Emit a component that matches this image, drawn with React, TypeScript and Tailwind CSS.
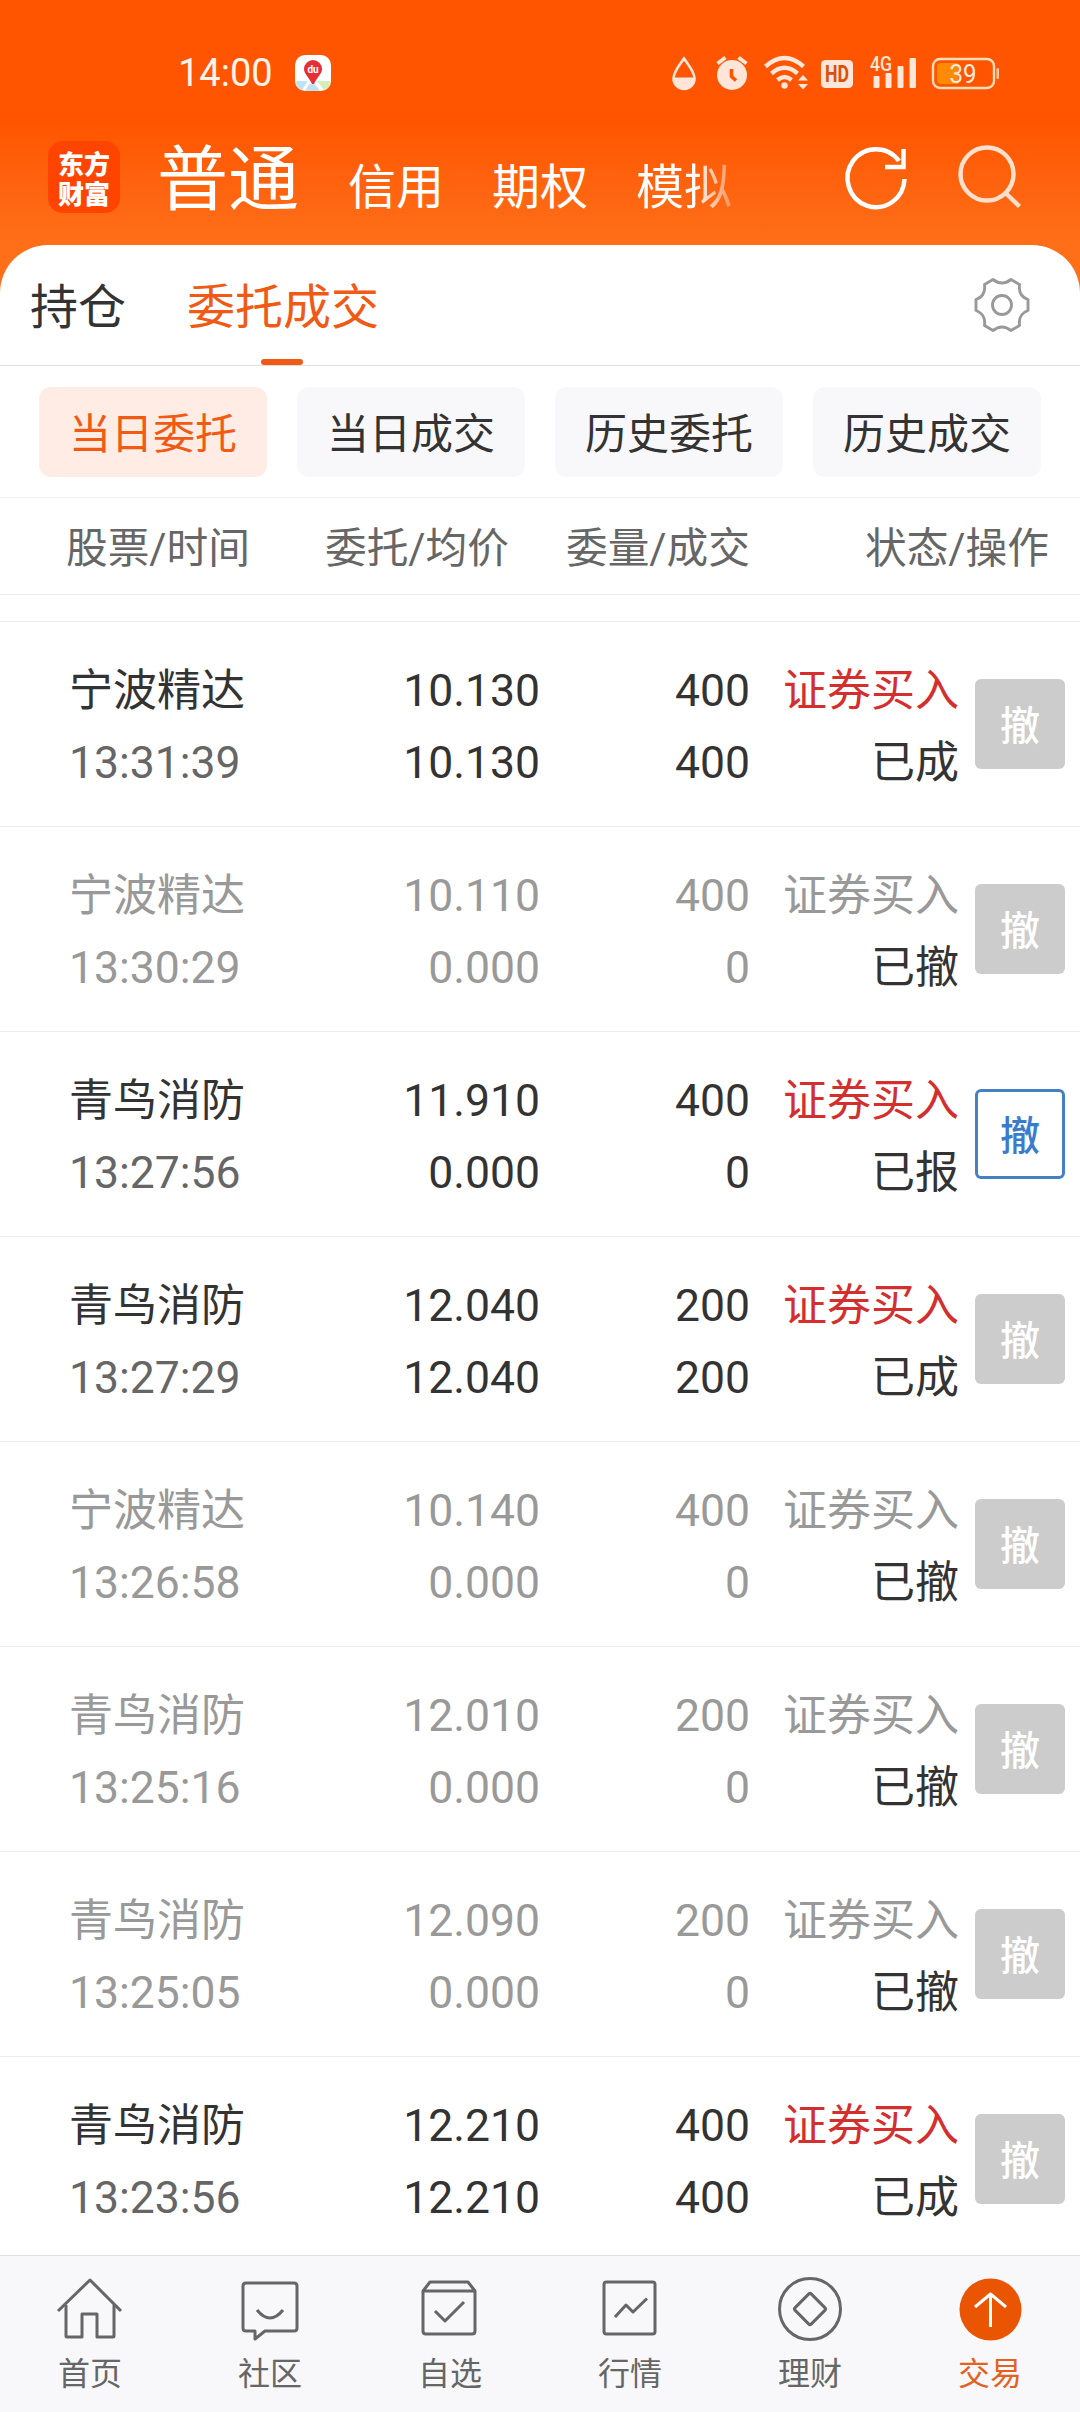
import type { ReactNode } from "react";

type Order = {
  name: string;
  time: string;
  price: string;
  avg: string;
  qty: string;
  filled: string;
  status: string;
};

const orders: Order[] = [
  { name: "宁波精达", time: "13:31:39", price: "10.130", avg: "10.130", qty: "400", filled: "400", status: "已成" },
  { name: "宁波精达", time: "13:30:29", price: "10.110", avg: "0.000", qty: "400", filled: "0", status: "已撤" },
  { name: "青鸟消防", time: "13:27:56", price: "11.910", avg: "0.000", qty: "400", filled: "0", status: "已报" },
  { name: "青鸟消防", time: "13:27:29", price: "12.040", avg: "12.040", qty: "200", filled: "200", status: "已成" },
  { name: "宁波精达", time: "13:26:58", price: "10.140", avg: "0.000", qty: "400", filled: "0", status: "已撤" },
  { name: "青鸟消防", time: "13:25:16", price: "12.010", avg: "0.000", qty: "200", filled: "0", status: "已撤" },
  { name: "青鸟消防", time: "13:25:05", price: "12.090", avg: "0.000", qty: "200", filled: "0", status: "已撤" },
  { name: "青鸟消防", time: "13:23:56", price: "12.210", avg: "12.210", qty: "400", filled: "400", status: "已成" },
];

const filters = ["当日委托", "当日成交", "历史委托", "历史成交"];

function StatusBar() {
  return (
    <div className="flex h-[110px] items-center pt-[36px] pl-[178px]">
      <span className="w-[117px] font-['Roboto'] text-[38px] leading-[38px] text-[#fff4ea]">14:00</span>
      <svg width="36" height="36" viewBox="0 0 36 36" className="shrink-0">
        <rect width="36" height="36" rx="10" fill="#fff" />
        <path d="M2 26H13L7 35Q1 33 1 27Z" fill="#bfe3f4" />
        <path d="M14 29L10 36H25L20 29Z" fill="#bfe3f4" />
        <path d="M22 26H35Q35 34 29 35Z" fill="#d5edb8" />
        <path d="M18 5a9 9 0 0 1 9 9c0 5-5 8-8 15h-2c-3-7-8-10-8-15a9 9 0 0 1 9-9Z" fill="#e62e35" />
        <text x="18" y="17.500" fontSize="10" fontWeight="700" fill="#fff" textAnchor="middle" fontFamily="Roboto">du</text>
      </svg>

      <svg width="340" height="40" viewBox="664 52 340 40" className="ml-[333px] shrink-0" fill="#ffe6d8">
        {/* eye-comfort droplet */}
        <path d="M684 57.500C680 63.500 673.500 70.500 673.500 77.500a10.500 10.500 0 0 0 21 0C694.500 70.500 688 63.500 684 57.500Z" fill="none" stroke="#ffe6d8" strokeWidth="2.600" />
        <path d="M673 76.500H695A11 11.500 0 0 1 673 76.500Z" />
        {/* alarm */}
        <circle cx="732" cy="74" r="15" />
        <path d="M717.500 62.500L725.500 56.500M746.500 62.500L738.500 56.500" stroke="#ffe6d8" strokeWidth="3.800" />
        <path d="M731.500 68V75.500L736 79.500" fill="none" stroke="#ff5500" strokeWidth="3.600" />
        {/* wifi with traffic arrows */}
        <g fill="none" stroke="#ffe6d8" strokeWidth="4.400">
          <path d="M765.500 65.500Q784.500 48.500 803.500 65.500" />
          <path d="M771.500 72.500Q784.500 61 797.500 72.500" />
          <path d="M777.500 79Q784.500 73 791.500 79" />
        </g>
        <circle cx="784.500" cy="84.500" r="3.200" />
        <path d="M803 74L808 79.500H798ZM803 88.500L798 83H808Z" />
        {/* HD */}
        <rect x="821" y="59" width="32" height="28" rx="4.500" />
        <text x="837" y="81" fontSize="23" fontWeight="700" textLength="24" lengthAdjust="spacingAndGlyphs" fill="#d8500c" textAnchor="middle" fontFamily="Roboto">HD</text>
        {/* signal */}
        <text x="870" y="70" fontSize="21" fontWeight="500" textLength="22" lengthAdjust="spacingAndGlyphs" fontFamily="Roboto">4G</text>
        <rect x="873.500" y="75" width="6" height="12" rx="1" />
        <rect x="885.500" y="72" width="6" height="15" rx="1" />
        <rect x="897.500" y="65" width="6" height="22" rx="1" />
        <rect x="909.500" y="57" width="6.500" height="30" rx="1" />
        {/* battery */}
        <rect x="933" y="58" width="61" height="29" rx="7" fill="none" stroke="#ffdcb8" strokeWidth="2.400" />
        <path d="M941 62H958V83H941Q937 83 937 79V66Q937 62 941 62Z" fill="#ff8a05" />
        <rect x="996.500" y="67" width="2.500" height="11" rx="1" fill="#ffc9a0" />
        <text x="963" y="81.500" fontSize="25" textLength="27" lengthAdjust="spacingAndGlyphs" textAnchor="middle" fill="#ffeeda" fontFamily="Roboto">39</text>
      </svg>
    </div>
  );
}

function TopNav() {
  return (
    <div className="flex h-[135px] pl-[48px] text-white">
      <div className="mt-[31px] size-[72px] shrink-0 rounded-[15px] bg-[#ff4400] px-[10px] pt-[7px] font-['Noto_Sans_CJK_SC'] text-[26px] leading-[30px] font-black">
        东方财富
      </div>
      <div className="ml-[37px] flex w-[602px] items-baseline text-[48px] leading-[140px]">
        <span className="text-[71px]">普通</span>
        <span className="ml-[49px]">信用</span>
        <span className="ml-[48px]">期权</span>
        <span className="ml-[48px] bg-linear-to-r from-white from-60% to-white/30 bg-clip-text text-transparent">模拟</span>
      </div>
      <svg width="70" height="70" viewBox="841 143 70 70" className="mt-[33px] ml-[82px] shrink-0" fill="none" stroke="#fff" strokeWidth="4.500">
        <path d="M904.500 179A28.500 29 0 1 1 899 161" />
        <path d="M903.500 149V167H885" />
      </svg>
      <svg width="70" height="70" viewBox="954 143 70 70" className="mt-[33px] ml-[43px] shrink-0" fill="none" stroke="#ffe0cc" strokeWidth="4.500">
        <circle cx="987" cy="174" r="26.500" />
        <path d="M1005.500 193L1019.500 206.500" />
      </svg>
    </div>
  );
}

function Tabs() {
  return (
    <div className="flex h-[121px] shrink-0 border-b border-[#dedede] pr-[50px] pl-[30px] text-[48px] leading-[126px]">
      <span className="text-[#333]">持仓</span>
      <div className="relative ml-[61px] text-[#f05a14]">
        委托成交
        <span className="absolute bottom-0 left-[74px] h-[6px] w-[42px] rounded-full bg-[#f05a14]" />
      </div>
      <svg width="56" height="56" viewBox="-28 -28 56 56" className="mt-[32px] ml-auto" fill="none" stroke="#999" strokeWidth="2.900" strokeLinejoin="round">
        <path d="M-9 -25.500Q0 -18.500 9 -25.500L17.500 -20.500Q16 -9 26 -5.500V5.500Q16 9 17.500 20.500L9 25.500Q0 18.500 -9 25.500L-17.500 20.500Q-16 9 -26 5.500V-5.500Q-16 -9 -17.500 -20.500Z" />
        <circle r="9.500" />
      </svg>
    </div>
  );
}

function OrderRow({ order }: { order: Order }) {
  const cancelled = order.status === "已撤";
  const open = order.status === "已报";
  const main = cancelled ? "text-[#999]" : "text-[#333]";

  return (
    <div className={`flex h-[205px] shrink-0 items-start border-b border-[#ececec] pt-[33px] pr-[15px] pl-[69px] text-[44px] leading-[72px] ${main}`}>
      <div className="w-[201px]">
        <div>{order.name}</div>
        <div className={`text-[44.5px] ${cancelled ? "text-[#999]" : "text-[#666]"}`}>{order.time}</div>
      </div>
      <div className="w-[270px] text-right text-[44.5px]">
        <div>{order.price}</div>
        <div>{order.avg}</div>
      </div>
      <div className="w-[210px] text-right text-[44.5px]">
        <div>{order.qty}</div>
        <div>{order.filled}</div>
      </div>
      <div className="w-[209px] text-right">
        <div className={cancelled ? "text-[#999]" : "text-[#d32f2f]"}>证券买入</div>
        <div className="text-[#333]">{order.status}</div>
      </div>
      <button
        className={`mt-[24px] ml-[16px] flex size-[90px] items-center justify-center rounded-[6px] pt-[5px] text-[40px] font-medium ${
          open ? "border-3 border-[#4580c4] bg-white text-[#3a7ccc]" : "bg-[#ccc] text-white"
        }`}
      >
        撤
      </button>
    </div>
  );
}

const navItems: { label: string; icon: ReactNode }[] = [
  {
    label: "首页",
    icon: (
      <>
        <path d="M4 38L36 7L67 38" />
        <path d="M12 32V63Q12 64 13 64H28V41H43V64H59Q60 64 60 63V32" />
      </>
    ),
  },
  {
    label: "社区",
    icon: (
      <>
        <path d="M12 10H60Q63 10 63 13V55Q63 58 60 58H31L21 66V58H12Q9 58 9 55V13Q9 10 12 10Z" />
        <path d="M23 37Q36 53 49 37" />
      </>
    ),
  },
  {
    label: "自选",
    icon: (
      <>
        <path d="M9 18L16 9H54L61 18V58Q61 61 58 61H12Q9 61 9 58ZM9 18H61" />
        <path d="M21 38L31 48L50 29" />
      </>
    ),
  },
  {
    label: "行情",
    icon: (
      <>
        <rect x="10" y="9" width="51" height="52" rx="2.500" />
        <path d="M21 44L32 32L39 39L53 25.500" />
      </>
    ),
  },
  {
    label: "理财",
    icon: (
      <>
        <circle cx="36" cy="36" r="30.500" />
        <rect x="24.500" y="24.500" width="23" height="23" rx="2" transform="rotate(45 36 36)" />
      </>
    ),
  },
  {
    label: "交易",
    icon: (
      <>
        <circle cx="36.500" cy="36.500" r="31" fill="#ea5504" stroke="none" />
        <path d="M36.500 54V21M21 34L36.500 21L52 34" stroke="#fff" />
      </>
    ),
  },
];

function BottomNav() {
  return (
    <nav className="grid h-[157px] shrink-0 grid-cols-6 border-t border-[#e0e0e0] bg-[#f8f8fa] text-[32px] leading-[40px] text-[#666]">
      {navItems.map(({ label, icon }) => (
        <div key={label} className="flex flex-col items-center pt-[17px]">
          <svg width="72" height="72" viewBox="0 0 72 72" fill="none" stroke="#666" strokeWidth="3" strokeLinejoin="round">
            {icon}
          </svg>
          <span className={label === "交易" ? "mt-[9px] text-[#e2621f]" : "mt-[9px]"}>{label}</span>
        </div>
      ))}
    </nav>
  );
}

export default function App() {
  return (
    <div className="flex h-[2412px] w-[1080px] flex-col overflow-hidden bg-white font-['Roboto','Noto_Sans_CJK_SC',sans-serif]">
      <header className="-mb-[60px] h-[305px] shrink-0 bg-linear-to-b from-[#ff5500] from-40% to-[#ff6f18] to-80%">
        <StatusBar />
        <TopNav />
      </header>

      <main className="flex min-h-0 flex-1 flex-col overflow-hidden rounded-t-[48px] bg-white">
        <Tabs />
        <div className="flex h-[132px] shrink-0 gap-[30px] border-b border-[#f3f3f3] px-[39px] pt-[21px] text-[42px] leading-[96px]">
          {filters.map((label, i) => (
            <div
              key={label}
              className={`h-[90px] flex-1 rounded-xl text-center ${i === 0 ? "bg-[#ffede5] text-[#f05a14]" : "bg-[#f8f8fa] text-[#333]"}`}
            >
              {label}
            </div>
          ))}
        </div>
        <div className="flex h-[97px] shrink-0 border-b border-[#ececec] pl-[66px] text-[41.7px] leading-[101px] text-[#666]">
          <span className="w-[259px]">股票/时间</span>
          <span className="w-[241px]">委托/均价</span>
          <span className="w-[299px]">委量/成交</span>
          <span>状态/操作</span>
        </div>
        <div className="h-[27px] shrink-0 border-b border-[#ececec]" />
        <div className="min-h-0 flex-1 overflow-hidden">
          {orders.map((order) => (
            <OrderRow key={order.time} order={order} />
          ))}
        </div>
      </main>

      <BottomNav />
    </div>
  );
}
